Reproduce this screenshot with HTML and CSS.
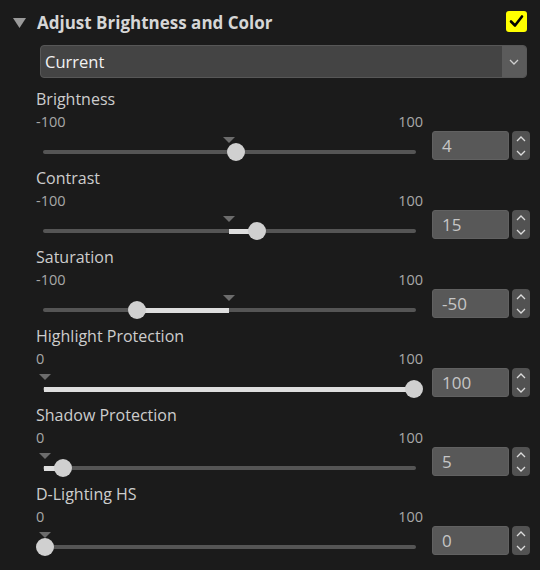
FILE: index.html
```html
<!DOCTYPE html>
<html>
<head>
<meta charset="utf-8">
<link rel="stylesheet" href="styles.css">
</head>
<body>
<div class="panel">
  <div class="header">
    <svg class="caret" width="13" height="10" viewBox="0 0 13 10"><polygon points="0,0 13,0 6.5,10" fill="#9a9a9a"/></svg>
    <span class="title">Adjust Brightness and Color</span>
    <svg class="check" width="21" height="21" viewBox="0 0 21 21"><rect x="0" y="0" width="21" height="21" rx="3" fill="#ffff00"/><path d="M5 10.5 L9 14.5 L16 5.5" fill="none" stroke="#000" stroke-width="2.6" stroke-linecap="round" stroke-linejoin="round"/></svg>
  </div>

  <div class="select">
    <span class="select-text">Current</span>
    <span class="select-arrow"><svg width="10" height="6" viewBox="0 0 10 6"><path d="M1 1 L5 5 L9 1" fill="none" stroke="#cfcfcf" stroke-width="1.3"/></svg></span>
  </div>

  <div class="params">
    <div class="param">
      <div class="label">Brightness</div>
      <div class="row">
        <div class="slider-col">
          <div class="range"><span>-100</span><span>100</span></div>
          <div class="track">
            <div class="marker" style="left:180px"></div>
            <div class="thumb" style="left:184.4px"></div>
          </div>
        </div>
        <div class="num">4</div>
        <div class="spin"><svg width="10" height="22" viewBox="0 0 10 22"><path d="M1 6 L5 2 L9 6 M1 16 L5 20 L9 16" fill="none" stroke="#dcdcdc" stroke-width="1.3"/></svg></div>
      </div>
    </div>

    <div class="param">
      <div class="label">Contrast</div>
      <div class="row">
        <div class="slider-col">
          <div class="range"><span>-100</span><span>100</span></div>
          <div class="track">
            <div class="fill" style="left:186px;width:28px"></div>
            <div class="marker" style="left:180px"></div>
            <div class="thumb" style="left:204.7px"></div>
          </div>
        </div>
        <div class="num">15</div>
        <div class="spin"><svg width="10" height="22" viewBox="0 0 10 22"><path d="M1 6 L5 2 L9 6 M1 16 L5 20 L9 16" fill="none" stroke="#dcdcdc" stroke-width="1.3"/></svg></div>
      </div>
    </div>

    <div class="param">
      <div class="label">Saturation</div>
      <div class="row">
        <div class="slider-col">
          <div class="range"><span>-100</span><span>100</span></div>
          <div class="track">
            <div class="fill" style="left:94px;width:92px"></div>
            <div class="marker" style="left:180px"></div>
            <div class="thumb" style="left:84.75px"></div>
          </div>
        </div>
        <div class="num">-50</div>
        <div class="spin"><svg width="10" height="22" viewBox="0 0 10 22"><path d="M1 6 L5 2 L9 6 M1 16 L5 20 L9 16" fill="none" stroke="#dcdcdc" stroke-width="1.3"/></svg></div>
      </div>
    </div>

    <div class="param">
      <div class="label">Highlight Protection</div>
      <div class="row">
        <div class="slider-col">
          <div class="range"><span>0</span><span>100</span></div>
          <div class="track">
            <div class="fill" style="left:1px;width:370px"></div>
            <div class="marker" style="left:-4px"></div>
            <div class="thumb" style="left:361.5px"></div>
          </div>
        </div>
        <div class="num">100</div>
        <div class="spin"><svg width="10" height="22" viewBox="0 0 10 22"><path d="M1 6 L5 2 L9 6 M1 16 L5 20 L9 16" fill="none" stroke="#dcdcdc" stroke-width="1.3"/></svg></div>
      </div>
    </div>

    <div class="param">
      <div class="label">Shadow Protection</div>
      <div class="row">
        <div class="slider-col">
          <div class="range"><span>0</span><span>100</span></div>
          <div class="track">
            <div class="fill" style="left:1px;width:19px"></div>
            <div class="marker" style="left:-4px"></div>
            <div class="thumb" style="left:10.95px"></div>
          </div>
        </div>
        <div class="num">5</div>
        <div class="spin"><svg width="10" height="22" viewBox="0 0 10 22"><path d="M1 6 L5 2 L9 6 M1 16 L5 20 L9 16" fill="none" stroke="#dcdcdc" stroke-width="1.3"/></svg></div>
      </div>
    </div>

    <div class="param">
      <div class="label">D-Lighting HS</div>
      <div class="row">
        <div class="slider-col">
          <div class="range"><span>0</span><span>100</span></div>
          <div class="track">
            <div class="marker" style="left:-4px"></div>
            <div class="thumb" style="left:-7.5px"></div>
          </div>
        </div>
        <div class="num">0</div>
        <div class="spin"><svg width="10" height="22" viewBox="0 0 10 22"><path d="M1 6 L5 2 L9 6 M1 16 L5 20 L9 16" fill="none" stroke="#dcdcdc" stroke-width="1.3"/></svg></div>
      </div>
    </div>
  </div>
</div>
</body>
</html>
```

FILE: styles.css
```css
* { box-sizing: border-box; }
html, body {
  margin: 0;
  padding: 0;
  background: #1b1b1b;
  width: 540px;
  height: 570px;
  overflow: hidden;
}
body {
  font-family: "Open Sans", "Noto Sans", sans-serif;
  color: #cfcfcf;
}
.header {
  display: flex;
  align-items: center;
  height: 44px;
  padding: 0 13px 0 13px;
}
.caret { display: block; margin-top: 2px; }
.title {
  margin-left: 11px;
  font-size: 17px;
  font-weight: 700;
  color: #d6d6d6;
}
.check { margin-left: auto; display: block; margin-top: -1px; }

.select {
  display: flex;
  margin: 1px 0 0 40px;
  width: 487px;
  height: 33px;
  background: #444;
  border: 1px solid #575757;
  border-radius: 4px;
  overflow: hidden;
}
.select-text {
  flex: 1;
  padding-left: 4px;
  font-size: 16.5px;
  line-height: 31px;
  color: #f2f2f2;
}
.select-arrow {
  width: 24px;
  background: #5b5b5b;
  display: flex;
  align-items: center;
  justify-content: center;
}
.select-arrow svg { display: block; }

.params {
  display: flex;
  flex-direction: column;
  gap: 8px;
  margin-top: 11px;
  padding-left: 36px;
}
.param {
  display: flex;
  flex-direction: column;
}
.label {
  font-size: 16px;
  line-height: 20px;
  color: #cdcdcd;
}
.row {
  display: flex;
  margin-top: 3px;
}
.slider-col {
  width: 387px;
  display: flex;
  flex-direction: column;
}
.range {
  display: flex;
  justify-content: space-between;
  font-size: 14.5px;
  line-height: 20px;
  color: #a8a8a8;
}
.track {
  position: relative;
  margin: 18px 7px 6px 7px;
  height: 4px;
  border-radius: 2px;
  background: #555;
}
.fill {
  position: absolute;
  top: -0.5px;
  height: 5px;
  background: #dedede;
}
.marker {
  position: absolute;
  top: -13px;
  width: 0;
  height: 0;
  border-left: 6px solid transparent;
  border-right: 6px solid transparent;
  border-top: 6px solid #6c6c6c;
}
.thumb {
  position: absolute;
  top: -7px;
  width: 18px;
  height: 18px;
  border-radius: 50%;
  background: #d0d0d0;
}
.num {
  align-self: flex-end;
  margin: 0 0 0 9px;
  width: 77px;
  height: 29px;
  background: #585858;
  border: 1px solid #616161;
  border-radius: 3px;
  padding-left: 9px;
  font-size: 17px;
  line-height: 27px;
  color: #c6c6c6;
}
.spin {
  align-self: flex-end;
  margin: 0 0 0 3px;
  width: 18px;
  height: 29px;
  background: #525252;
  border-radius: 4px;
  display: flex;
  align-items: center;
  justify-content: center;
}
.spin svg { display: block; }
```
